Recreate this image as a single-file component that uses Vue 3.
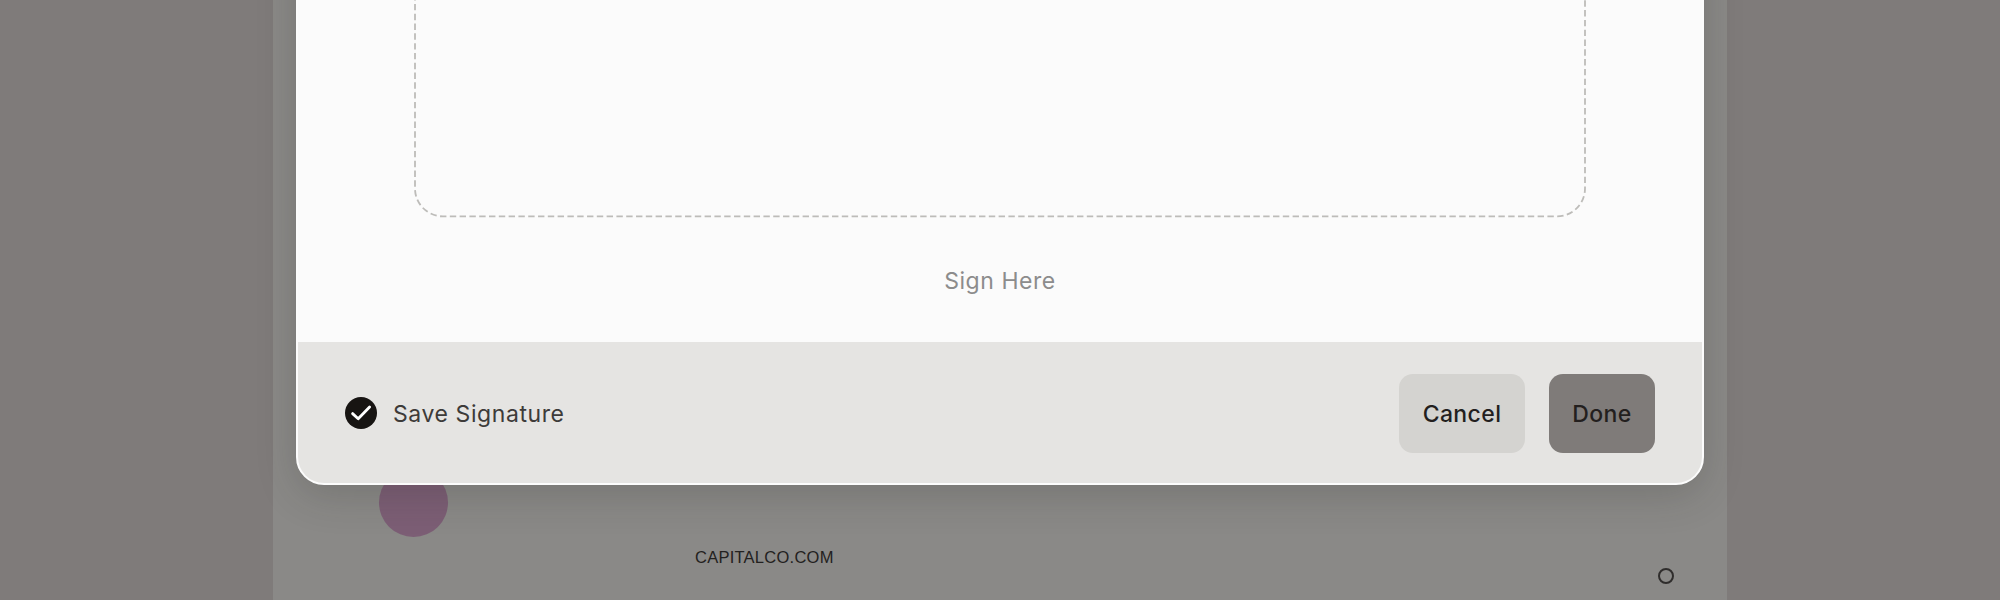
<script setup>
const domain = 'CAPITALCO.COM'
</script>

<template>
  <div class="stage">
    <div class="page">
      <div class="blob"></div>
      <div class="domain">{{ domain }}</div>
      <div class="dot"></div>
    </div>
    <div class="overlay">
      <section class="modal">
        <div class="body">
          <svg class="pad" width="1172" height="500" viewBox="0 0 1172 500" aria-hidden="true">
            <rect x="1" y="1" width="1170" height="497.4" rx="28" ry="28" fill="none" stroke="#bdbcb9" stroke-width="1.8" stroke-dasharray="6.4 3.4" />
          </svg>
          <div class="hint">Sign Here</div>
        </div>
        <footer class="foot">
          <label class="save">
            <svg class="check" viewBox="0 0 32 32" width="32" height="32" aria-hidden="true">
              <circle cx="16" cy="16" r="16" fill="#171412" />
              <path d="M7.6 16.6l5.6 5.2L24.6 10" fill="none" stroke="#fff" stroke-width="2.8" stroke-linecap="round" stroke-linejoin="round" />
            </svg>
            <span class="save-text">Save Signature</span>
          </label>
          <div class="actions">
            <button class="btn cancel" type="button">Cancel</button>
            <button class="btn done" type="button">Done</button>
          </div>
        </footer>
      </section>
    </div>
  </div>
</template>

<style>
html, body { margin: 0; background: #7f7b7a; }
</style>

<style scoped>
.stage {
  position: relative;
  width: 2000px;
  height: 600px;
  overflow: hidden;
  background: #7f7b7a;
  display: flex;
  justify-content: center;
  font-family: Inter, "Liberation Sans", sans-serif;
}
.page {
  width: 1454px;
  height: 600px;
  background: #8a8987;
  display: flex;
  align-items: flex-start;
  padding-left: 106px;
  box-sizing: border-box;
}
.blob {
  width: 69px;
  height: 69px;
  margin-top: 468px;
  border-radius: 50%;
  background: #7c5e75;
  flex: none;
}
.domain {
  margin-top: 547px;
  margin-left: 247px;
  font-family: "Liberation Sans", Arial, sans-serif;
  font-size: 16.5px;
  line-height: 21px;
  letter-spacing: 0.25px;
  color: #232120;
  flex: none;
}
.dot {
  width: 16px;
  height: 16px;
  box-sizing: border-box;
  margin-top: 568px;
  margin-left: 824px;
  border: 2px solid #2f2d2c;
  border-radius: 50%;
  flex: none;
}
.overlay {
  position: absolute;
  left: 0;
  right: 0;
  bottom: 115px;
  display: flex;
  justify-content: center;
}
.modal {
  width: 1408px;
  box-sizing: border-box;
  background: #fbfbfb;
  border: 2px solid #fcfcfc;
  border-radius: 28px;
  overflow: hidden;
  box-shadow: 0 10px 40px rgba(40, 38, 36, 0.2);
}
.body {
  padding: 0 116px;
  display: flex;
  flex-direction: column;
  align-items: center;
}
.pad {
  display: block;
  flex: none;
}
.hint {
  margin: 49px 0 47px;
  font-size: 23px;
  line-height: 28px;
  letter-spacing: 0.55px;
  color: #8c8c8c;
}
.foot {
  height: 141px;
  box-sizing: border-box;
  background: #e5e4e2;
  padding: 1px 47px 0;
  display: flex;
  align-items: center;
  justify-content: space-between;
}
.save {
  display: flex;
  align-items: center;
  gap: 16px;
  font-size: 23px;
  letter-spacing: 0.58px;
  color: #3d3b39;
}
.save-text { padding-top: 1px; }
.check { display: block; flex: none; }
.actions {
  display: flex;
  gap: 24px;
}
.btn {
  height: 79px;
  border: none;
  border-radius: 14px;
  font-family: inherit;
  font-size: 23px;
  font-weight: 450;
  letter-spacing: 0.4px;
  color: #231f1e;
  padding: 1px 0 0;
}
.cancel { width: 126px; background: #d4d3d0; }
.done { width: 106px; background: #7f7b79; }
</style>
